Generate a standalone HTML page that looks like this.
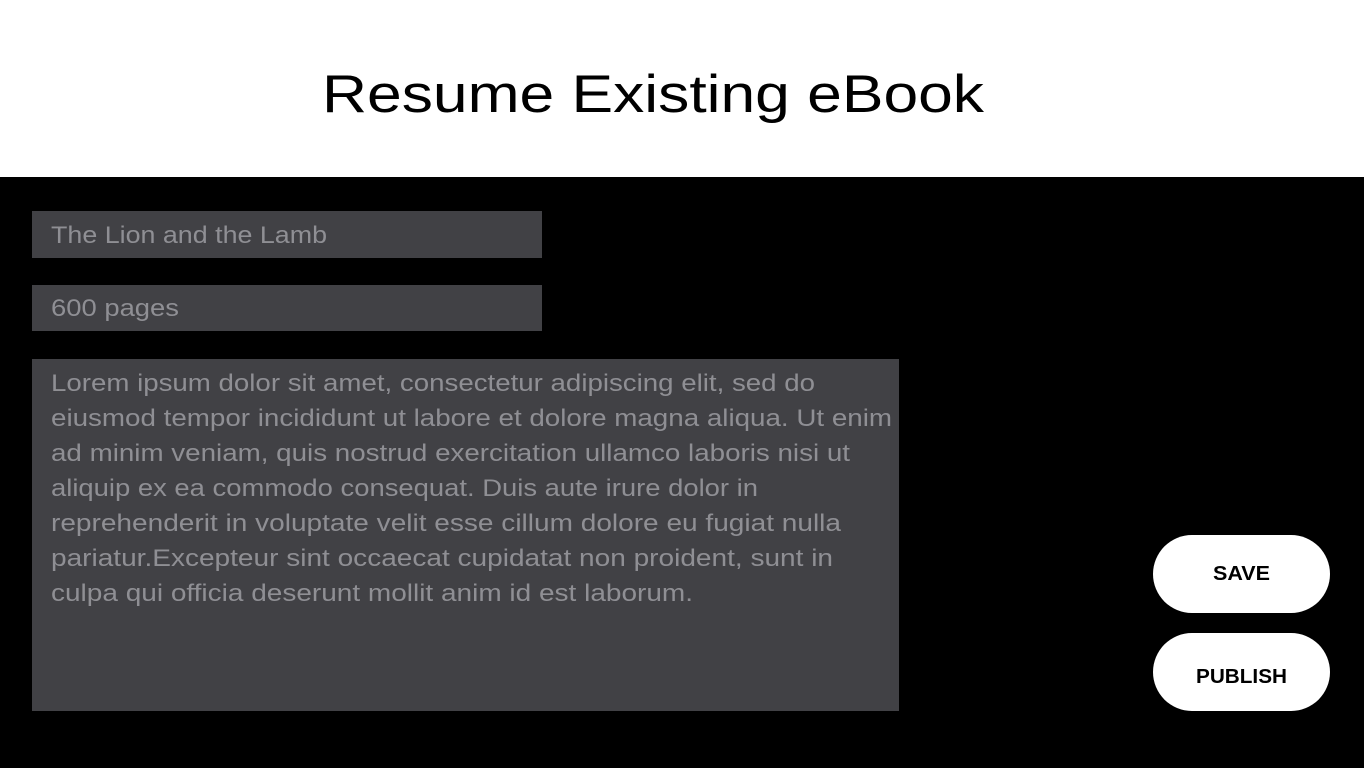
<!DOCTYPE html>
<html><head><meta charset="utf-8"><style>
html,body{margin:0;padding:0;width:1366px;height:768px;overflow:hidden;background:#fff}
svg{display:block}
</style></head><body>
<svg width="1366" height="768" xmlns="http://www.w3.org/2000/svg" font-family="'Liberation Sans', sans-serif">
<rect x="0" y="0" width="1366" height="768" fill="#fff"/>
<text x="322" y="112" font-size="53" fill="#000" textLength="662" lengthAdjust="spacingAndGlyphs">Resume Existing eBook</text>
<rect x="0" y="177" width="1364" height="591" fill="#000"/>
<rect x="32" y="211" width="510" height="47" fill="#414145"/>
<rect x="32" y="285" width="510" height="46" fill="#414145"/>
<rect x="32" y="359" width="867" height="352" fill="#414145"/>
<g fill="#8f8f94" font-size="24">
<text x="51" y="243" textLength="276" lengthAdjust="spacingAndGlyphs">The Lion and the Lamb</text>
<text x="51" y="316" textLength="128" lengthAdjust="spacingAndGlyphs">600 pages</text>
<text x="51" y="391" textLength="764" lengthAdjust="spacingAndGlyphs">Lorem ipsum dolor sit amet, consectetur adipiscing elit, sed do</text>
<text x="51" y="426" textLength="841" lengthAdjust="spacingAndGlyphs">eiusmod tempor incididunt ut labore et dolore magna aliqua. Ut enim</text>
<text x="51" y="461" textLength="799" lengthAdjust="spacingAndGlyphs">ad minim veniam, quis nostrud exercitation ullamco laboris nisi ut</text>
<text x="51" y="496" textLength="707" lengthAdjust="spacingAndGlyphs">aliquip ex ea commodo consequat. Duis aute irure dolor in</text>
<text x="51" y="531" textLength="790" lengthAdjust="spacingAndGlyphs">reprehenderit in voluptate velit esse cillum dolore eu fugiat nulla</text>
<text x="51" y="566" textLength="782" lengthAdjust="spacingAndGlyphs">pariatur.Excepteur sint occaecat cupidatat non proident, sunt in</text>
<text x="51" y="601" textLength="642" lengthAdjust="spacingAndGlyphs">culpa qui officia deserunt mollit anim id est laborum.</text>
</g>
<rect x="1153" y="535" width="177" height="78" rx="39" fill="#fff"/>
<rect x="1153" y="633" width="177" height="78" rx="39" fill="#fff"/>
<text x="1213" y="580" font-size="20" font-weight="bold" fill="#000" textLength="57" lengthAdjust="spacingAndGlyphs">SAVE</text>
<text x="1196" y="683" font-size="20" font-weight="bold" fill="#000" textLength="91" lengthAdjust="spacingAndGlyphs">PUBLISH</text>
</svg>
</body></html>
